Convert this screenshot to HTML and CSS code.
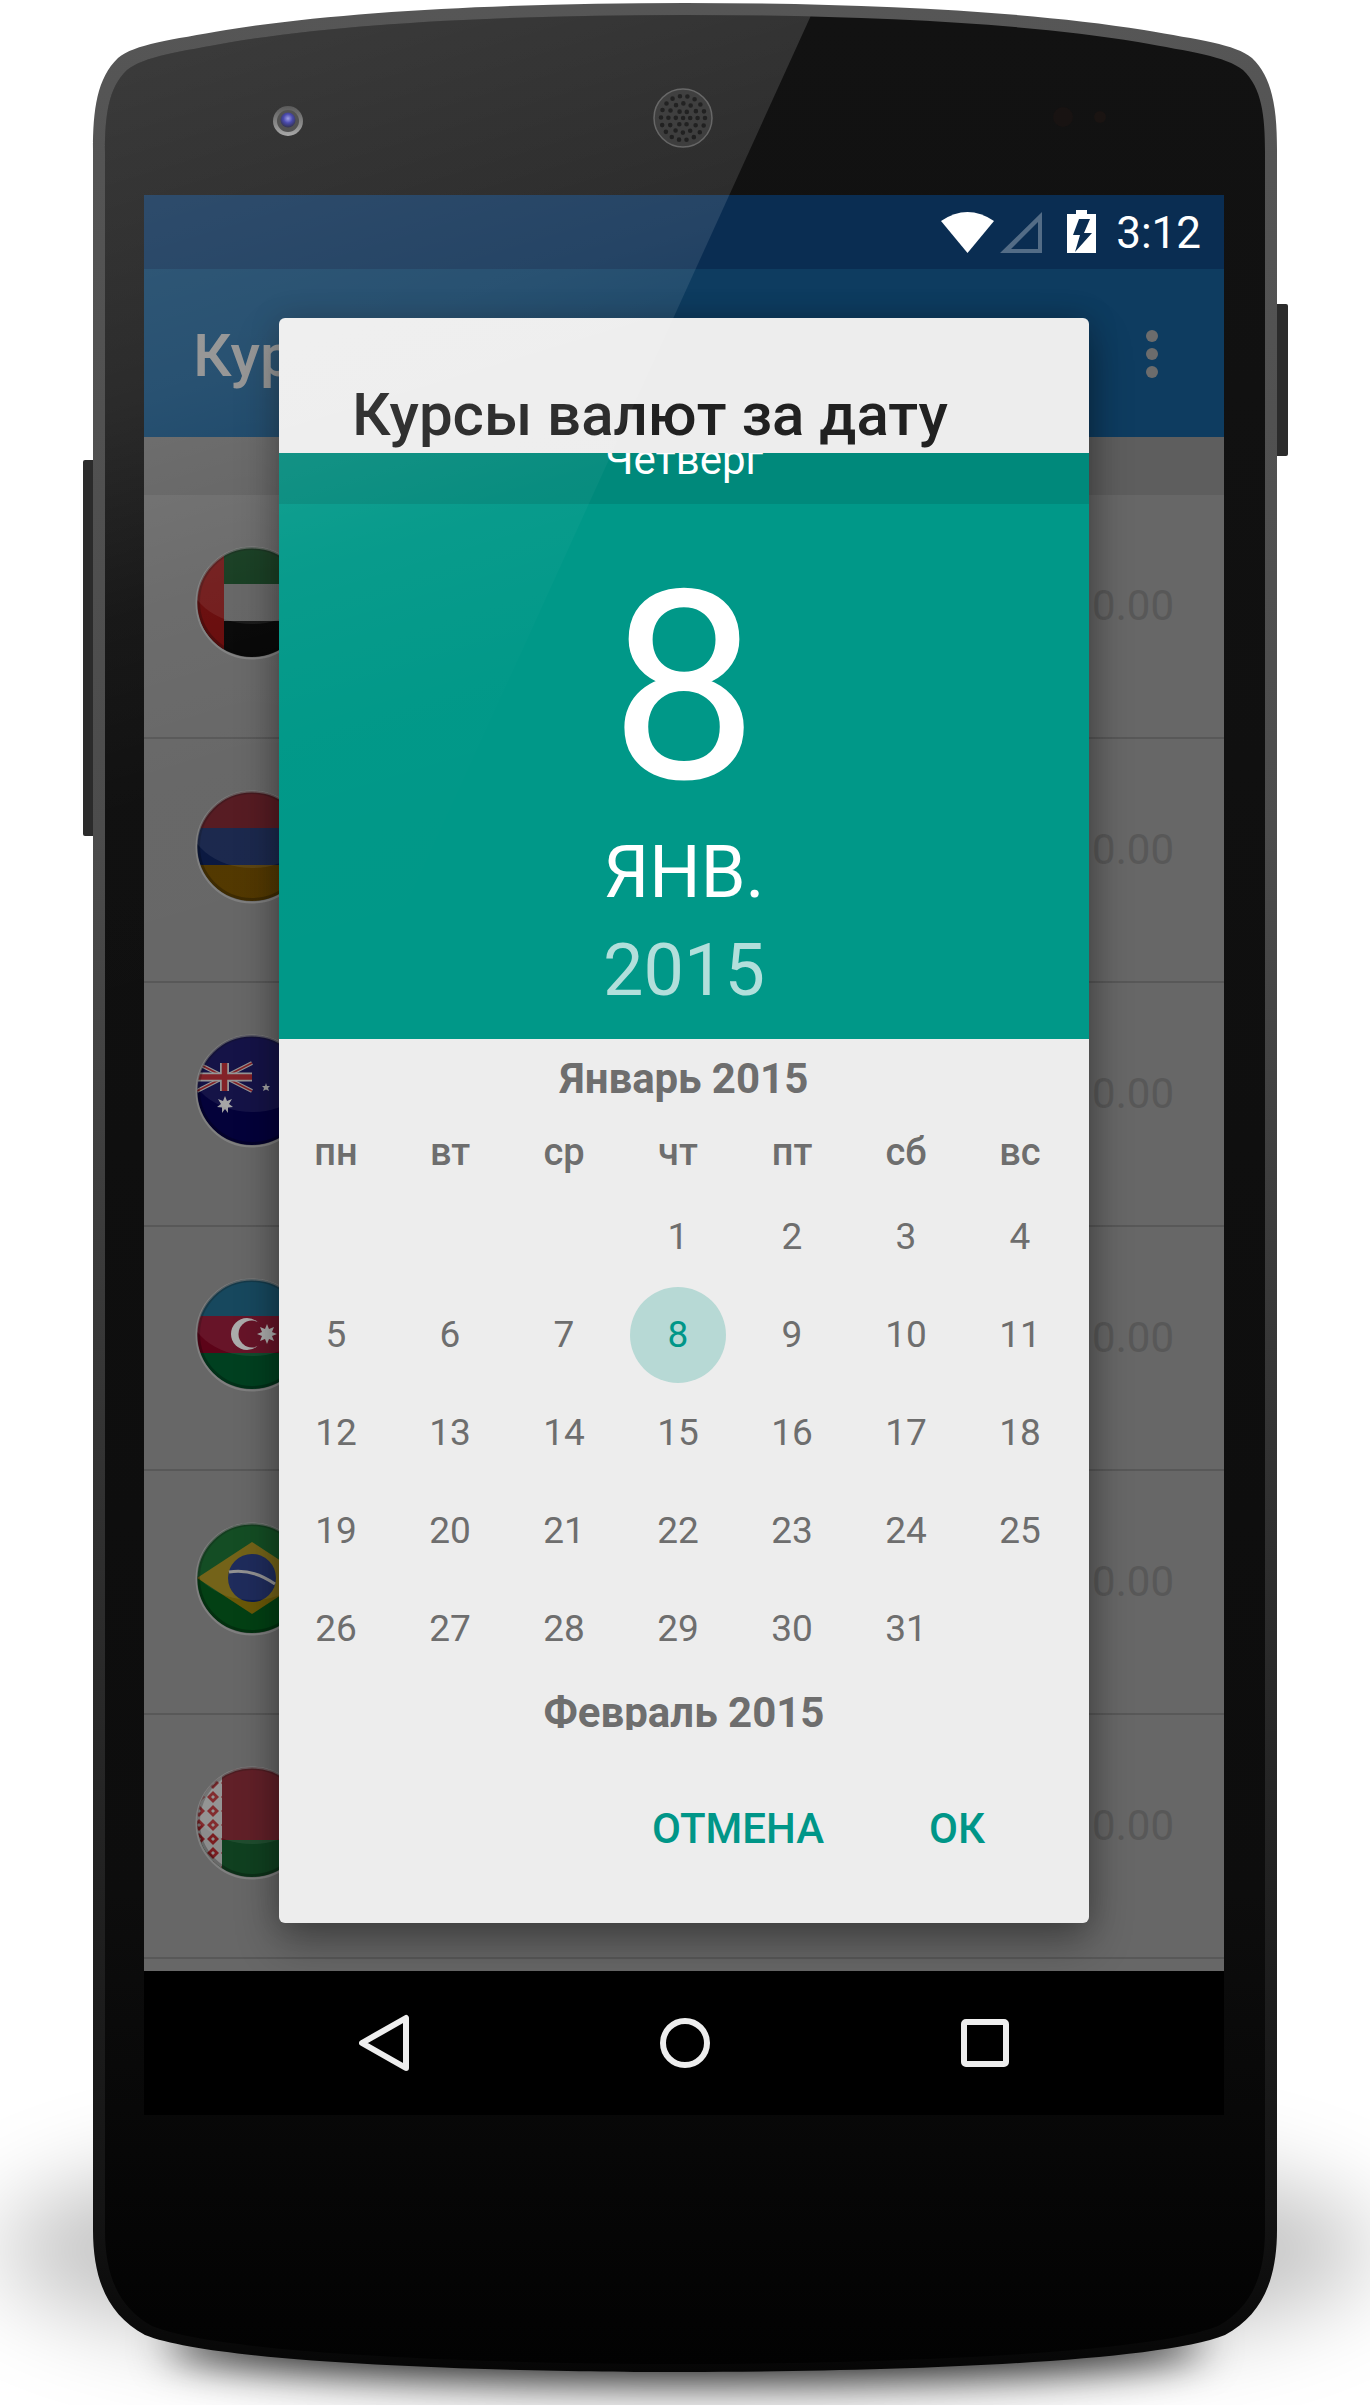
FILE: index.html
```html
<!DOCTYPE html>
<html lang="ru">
<head>
<meta charset="utf-8">
<title>Курсы валют за дату</title>
<link rel="stylesheet" href="styles.css">
</head>
<body>
<div class="device">
  <svg class="layer" width="1370" height="2405" viewBox="0 0 1370 2405" aria-hidden="true">
    <defs>
      <filter id="blur-shadow" x="-20%" y="-100%" width="140%" height="300%"><feGaussianBlur stdDeviation="20"/></filter>
      <filter id="blur-wide" x="-30%" y="-100%" width="160%" height="300%"><feGaussianBlur stdDeviation="45"/></filter>
      <linearGradient id="rim" x1="0" y1="0" x2="0" y2="1">
        <stop offset="0" stop-color="#565656"/><stop offset=".35" stop-color="#4c4c4c"/>
        <stop offset=".7" stop-color="#2a2a2a"/><stop offset=".93" stop-color="#141414"/><stop offset="1" stop-color="#060606"/>
      </linearGradient>
      <linearGradient id="bezel" x1="0" y1="0" x2="0" y2="1">
        <stop offset="0" stop-color="#121212"/><stop offset=".8" stop-color="#0d0d0d"/><stop offset="1" stop-color="#020202"/>
      </linearGradient>
      <radialGradient id="lens" cx=".5" cy=".4" r=".6">
        <stop offset="0" stop-color="#8f8fe0"/><stop offset=".5" stop-color="#2a2aa0"/><stop offset="1" stop-color="#101030"/>
      </radialGradient>
      <linearGradient id="lens-ring" x1="0" y1="0" x2="0" y2="1">
        <stop offset="0" stop-color="#3c3c3c"/><stop offset="1" stop-color="#9a9a9a"/>
      </linearGradient>
    </defs>
    <ellipse cx="685" cy="2250" rx="690" ry="120" fill="#000" fill-opacity=".24" filter="url(#blur-wide)"/>
    <ellipse cx="685" cy="2345" rx="520" ry="36" fill="#000" fill-opacity=".85" filter="url(#blur-shadow)"/>
    <rect x="83" y="460" width="14" height="376" rx="2" fill="#2b2b2b"/>
    <rect x="1274" y="304" width="14" height="152" rx="2" fill="#2b2b2b"/>
    <path fill="url(#rim)" d="M93 150C93 110 97 78 118 58C135 44 170 40 226 30C350 10 520 3 685 3C850 3 1020 10 1144 30C1200 40 1235 44 1252 58C1273 78 1277 110 1277 150V2230C1277 2280 1262 2315 1225 2335C1150 2365 850 2372 685 2372C520 2372 220 2365 145 2335C108 2315 93 2280 93 2230Z"/>
    <path fill="url(#bezel)" d="M105 152C105 116 108 88 127 70C145 56 178 52 232 42C352 22 522 15 685 15C848 15 1018 22 1138 42C1192 52 1225 56 1243 70C1262 88 1265 116 1265 152V2230C1265 2275 1252 2307 1218 2326C1145 2356 850 2364 685 2364C520 2364 225 2356 152 2326C118 2307 105 2275 105 2230Z"/>
    <circle cx="288" cy="121" r="15" fill="url(#lens-ring)"/>
    <circle cx="288" cy="121" r="11" fill="#333"/>
    <circle cx="288" cy="120" r="7.5" fill="url(#lens)"/>
    <circle cx="683" cy="118" r="29" fill="#222" stroke="#505050" stroke-width="1.5"/>
    <g fill="none" stroke="#000" stroke-width="4.6" stroke-linecap="round">
      <circle cx="683" cy="118" r="0.1" stroke-dasharray="0 1"/>
      <circle cx="683" cy="118" r="7.2" stroke-dasharray="0 7.54"/>
      <circle cx="683" cy="118" r="14.6" stroke-dasharray="0 7.64"/>
      <circle cx="683" cy="118" r="22" stroke-dasharray="0 7.68"/>
    </g>
    <circle cx="1063" cy="117" r="10" fill="#181312"/>
    <circle cx="1100" cy="117" r="6" fill="#1a1412"/>
  </svg>

  <svg class="hidden-defs" width="0" height="0" aria-hidden="true">
    <defs>
      <clipPath id="flag-clip"><circle cx="60" cy="60" r="55"/></clipPath>
      <clipPath id="flag-gloss-clip"><ellipse cx="60" cy="28" rx="66" ry="54"/></clipPath>
      <pattern id="orn" width="14" height="14" patternUnits="userSpaceOnUse">
        <rect width="14" height="14" fill="#8c8c8c"/>
        <path d="M7 1L13 7L7 13L1 7Z" fill="#7a1c20"/><path d="M7 5L9 7L7 9L5 7Z" fill="#8c8c8c"/>
      </pattern>
      <g id="flag-gloss">
        <circle cx="60" cy="61" r="55.500" fill="none" stroke="#8a8a8a" stroke-opacity=".7" stroke-width="2"/>
        <circle cx="60" cy="60" r="53.500" fill="none" stroke="#000" stroke-opacity=".25" stroke-width="3"/>
        <g clip-path="url(#flag-clip)"><rect x="0" y="0" width="120" height="120" fill="#fff" fill-opacity=".07" clip-path="url(#flag-gloss-clip)"/></g>
      </g>
    </defs>
  </svg>

  <main class="screen">
    <header class="status">
      <svg class="st-wifi" width="54" height="44" viewBox="0 0 54 44"><path fill="#fff" d="M0 9Q26.500-9 53 9L26.500 41Z"/></svg>
      <svg class="st-signal" width="44" height="44" viewBox="0 0 44 44"><path fill="#fff" fill-opacity=".3" fill-rule="evenodd" d="M1 41L43 0V41ZM12 37H39V10Z"/></svg>
      <svg class="st-batt" width="29" height="43" viewBox="0 0 29 43"><path fill="#fff" fill-rule="evenodd" d="M9 0H20V4H29V43H0V4H9ZM12 9L6 25H13L8 42L25 23H17L23 9Z"/></svg>
      <span class="st-time">3:12</span>
    </header>
    <div class="appbar">
      <span class="appbar-title">Курсы валют</span>
      <span class="overflow"><i class="dot"></i><i class="dot"></i><i class="dot"></i></span>
    </div>
    <div class="list-head"></div>
    <div class="list">
      <div class="row">
        <svg class="flag" width="120" height="120" viewBox="0 0 120 120"><g clip-path="url(#flag-clip)">
          <rect width="120" height="42" fill="#002a0c"/><rect y="42" width="120" height="37" fill="#585858"/><rect y="79" width="120" height="41" fill="#040404"/><rect width="32" height="120" fill="#660808"/>
        </g><use href="#flag-gloss"/></svg>
        <span class="amount">0.00</span>
      </div>
      <div class="row">
        <svg class="flag" width="120" height="120" viewBox="0 0 120 120"><g clip-path="url(#flag-clip)">
          <rect width="120" height="42" fill="#4a0a12"/><rect y="42" width="120" height="37" fill="#0a1840"/><rect y="79" width="120" height="41" fill="#523800"/>
        </g><use href="#flag-gloss"/></svg>
        <span class="amount">0.00</span>
      </div>
      <div class="row">
        <svg class="flag" width="120" height="120" viewBox="0 0 120 120"><g clip-path="url(#flag-clip)">
          <rect width="120" height="120" fill="#04023a"/>
          <g stroke="#8d8d8d" stroke-width="4"><path d="M5 33L60 61M60 33L5 61"/></g>
          <g stroke="#7a1218" stroke-width="1.6"><path d="M5 33L60 61M60 33L5 61"/></g>
          <g stroke="#8d8d8d" stroke-width="9"><path d="M32.500 33V61M5 47H60"/></g>
          <g stroke="#7a1218" stroke-width="5.500"><path d="M32.500 33V61M5 47H60"/></g>
          <polygon fill="#a0a0a0" points="33,66 35,71 40,69 37,74 41,77 36,77.500 36,83 33,79 30,83 30,77.500 25,77 29,74 26,69 31,71"/>
          <polygon fill="#9a9a9a" points="74,53 75,56 78,56 76,58 77,61 74,59.500 71,61 72,58 70,56 73,56"/>
        </g><use href="#flag-gloss"/></svg>
        <span class="amount">0.00</span>
      </div>
      <div class="row">
        <svg class="flag" width="120" height="120" viewBox="0 0 120 120"><g clip-path="url(#flag-clip)">
          <rect width="120" height="42" fill="#063b52"/><rect y="42" width="120" height="37" fill="#5c0318"/><rect y="79" width="120" height="41" fill="#004020"/>
          <circle cx="55" cy="60" r="16" fill="#a6a6a6"/><circle cx="60" cy="60" r="13.500" fill="#5c0318"/>
          <polygon fill="#a6a6a6" points="75,50 77,55 82,53 80,58 85,60 80,62 82,67 77,65 75,70 73,65 68,67 70,62 65,60 70,58 68,53 73,55"/>
        </g><use href="#flag-gloss"/></svg>
        <span class="amount">0.00</span>
      </div>
      <div class="row">
        <svg class="flag" width="120" height="120" viewBox="0 0 120 120"><g clip-path="url(#flag-clip)">
          <rect width="120" height="120" fill="#034014"/>
          <polygon fill="#6a5808" points="5,60 60,24 115,60 60,96"/>
          <circle cx="60" cy="60" r="24" fill="#0e1c50"/>
          <path d="M37 54Q60 50 83 66" fill="none" stroke="#8a8a8a" stroke-width="3"/>
        </g><use href="#flag-gloss"/></svg>
        <span class="amount">0.00</span>
      </div>
      <div class="row">
        <svg class="flag" width="120" height="120" viewBox="0 0 120 120"><g clip-path="url(#flag-clip)">
          <rect width="120" height="78" fill="#561018"/><rect y="78" width="120" height="42" fill="#104020"/><rect width="30" height="120" fill="url(#orn)"/>
        </g><use href="#flag-gloss"/></svg>
        <span class="amount">0.00</span>
      </div>
    </div>
    <nav class="navbar">
      <svg width="50" height="58" viewBox="0 0 50 58"><path fill="none" stroke="#eee" stroke-width="6" stroke-linejoin="round" d="M47 4V54L3 29Z"/></svg>
      <svg width="50" height="50" viewBox="0 0 50 50"><circle cx="25" cy="25" r="22" fill="none" stroke="#eee" stroke-width="6"/></svg>
      <svg width="48" height="48" viewBox="0 0 48 48"><rect x="3" y="3" width="42" height="42" rx="2" fill="none" stroke="#eee" stroke-width="6"/></svg>
    </nav>
  </main>

  <section class="dialog">
    <h1 class="dlg-title">Курсы валют за дату</h1>
    <div class="dlg-day">Четверг</div>
    <div class="dlg-date">
      <div class="big-day">8</div>
      <div class="big-month">ЯНВ.</div>
      <div class="big-year">2015</div>
    </div>
    <div class="cal">
      <div class="cal-month">Январь 2015</div>
      <div class="cal-grid cal-week"><span>пн</span><span>вт</span><span>ср</span><span>чт</span><span>пт</span><span>сб</span><span>вс</span></div>
      <div class="cal-grid cal-days">
        <span></span><span></span><span></span><span>1</span><span>2</span><span>3</span><span>4</span>
        <span>5</span><span>6</span><span>7</span><span class="sel"><b>8</b></span><span>9</span><span>10</span><span>11</span>
        <span>12</span><span>13</span><span>14</span><span>15</span><span>16</span><span>17</span><span>18</span>
        <span>19</span><span>20</span><span>21</span><span>22</span><span>23</span><span>24</span><span>25</span>
        <span>26</span><span>27</span><span>28</span><span>29</span><span>30</span><span>31</span><span></span>
      </div>
      <div class="cal-month cal-next">Февраль 2015</div>
    </div>
    <div class="dlg-actions"><span>ОТМЕНА</span><span>ОК</span></div>
  </section>

  <svg class="layer gloss" width="1370" height="2405" viewBox="0 0 1370 2405" aria-hidden="true">
    <defs>
      <clipPath id="phone-clip"><path d="M105 152C105 116 108 88 127 70C145 56 178 52 232 42C352 22 522 15 685 15C848 15 1018 22 1138 42C1192 52 1225 56 1243 70C1262 88 1265 116 1265 152V2230C1265 2275 1252 2307 1218 2326C1145 2356 850 2364 685 2364C520 2364 225 2356 152 2326C118 2307 105 2275 105 2230Z"/></clipPath>
      <linearGradient id="gloss-grad" gradientUnits="userSpaceOnUse" x1="150" y1="60" x2="480" y2="1150">
        <stop offset="0" stop-color="#fff" stop-opacity=".17"/>
        <stop offset=".28" stop-color="#fff" stop-opacity=".11"/>
        <stop offset=".46" stop-color="#fff" stop-opacity=".035"/>
        <stop offset=".62" stop-color="#fff" stop-opacity=".006"/>
        <stop offset=".85" stop-color="#fff" stop-opacity="0"/>
      </linearGradient>
    </defs>
    <g clip-path="url(#phone-clip)"><path d="M0 0H818L0 1798Z" fill="url(#gloss-grad)"/></g>
  </svg>
</div>
</body>
</html>
```

FILE: styles.css
```css
* { box-sizing: border-box; }
html, body { margin: 0; background: #fff; }
body { font-family: Roboto, "Noto Sans", sans-serif; }

.device { position: relative; width: 1370px; height: 2405px; overflow: hidden; }
.layer { position: absolute; left: 0; top: 0; display: block; }
.gloss { pointer-events: none; }
.hidden-defs { position: absolute; }

/* phone screen */
.screen {
  position: absolute; left: 144px; top: 195px;
  width: 1080px; height: 1920px;
  display: flex; flex-direction: column; overflow: hidden;
}
.status {
  flex: 0 0 74px; background: #0a2d52;
  display: flex; align-items: flex-start; justify-content: flex-end; padding: 0 23px 0 0;
}
.status svg { display: block; flex: none; }
.st-wifi { margin-top: 17px; }
.st-signal { margin: 17px 0 0 4px; }
.st-batt { margin: 15px 0 0 24px; }
.st-time { margin: 13px 0 0 20px; color: #fff; font-size: 44px; line-height: 50px; }

.appbar {
  flex: 0 0 168px; background: #0e3c60;
  display: flex; justify-content: space-between; align-items: flex-start;
  padding: 52px 66px 0 49px;
}
.appbar-title { color: #8a8a8a; font-size: 60px; line-height: 70px; font-weight: 500; white-space: nowrap; }
.overflow { display: flex; flex-direction: column; gap: 6px; margin-top: 9px; }
.dot { display: block; width: 12px; height: 12px; border-radius: 50%; background: #6c6c6c; }

.list-head { flex: 0 0 58px; background: #5e5e5e; }
.list { flex: 0 0 1476px; background: #676767; overflow: hidden; }
.row {
  height: 244px; border-bottom: 2px solid #585858;
  display: flex; align-items: flex-start; padding: 47px 50px 0 48px;
}
.flag { display: block; flex: none; }
.amount { margin: 39px 0 0 auto; color: #585858; font-size: 42px; line-height: 50px; font-weight: 400; }

.navbar {
  flex: 0 0 144px; background: #000;
  display: flex; align-items: center; justify-content: center; gap: 251px;
}
.navbar svg { display: block; }

/* dialog */
.dialog {
  position: absolute; left: 279px; top: 318px;
  width: 810px; height: 1605px;
  background: #ededed; border-radius: 6px; overflow: hidden;
  box-shadow: 0 20px 44px rgba(0, 0, 0, .32), 0 0 30px rgba(0, 0, 0, .2);
}
.dlg-title {
  margin: 0; height: 135px; padding: 62px 0 0 73px;
  color: #212121; font-size: 60px; line-height: 70px; font-weight: 500; white-space: nowrap; overflow: hidden;
}
.dlg-day {
  height: 51px; padding-bottom: 19px; background: #00897b; color: #fff;
  display: flex; justify-content: center; align-items: flex-end;
  font-size: 42px; line-height: 50px; overflow: hidden;
}
.dlg-date { height: 535px; background: #009888; text-align: center; padding-top: 52px; color: #fff; }
.big-day { font-size: 264px; line-height: 264px; }
.big-month { margin-top: 13px; font-size: 72px; line-height: 80px; }
.big-year { margin-top: 18px; font-size: 72px; line-height: 80px; color: #b2dfdb; }

.cal { height: 691px; padding-top: 15px; overflow: hidden; color: #6e6e6e; }
.cal-month { font-size: 42px; line-height: 50px; font-weight: 700; text-align: center; }
.cal-next { margin-top: 10px; }
.cal-grid { display: grid; grid-template-columns: repeat(7, 114px); text-align: center; }
.cal-week { margin-top: 26px; font-size: 38px; line-height: 44px; font-weight: 500; }
.cal-days { margin-top: 14px; font-size: 37px; line-height: 98px; }
.cal-days span { display: flex; justify-content: center; align-items: center; height: 98px; }
.sel b {
  display: flex; align-items: center; justify-content: center;
  width: 96px; height: 96px; border-radius: 50%;
  background: #b7d9d5; color: #009688; font-weight: 400;
}
.dlg-actions {
  display: flex; justify-content: flex-end; gap: 105px;
  padding: 74px 104px 0 0;
  color: #009688; font-size: 42px; line-height: 50px; font-weight: 500;
}
```
